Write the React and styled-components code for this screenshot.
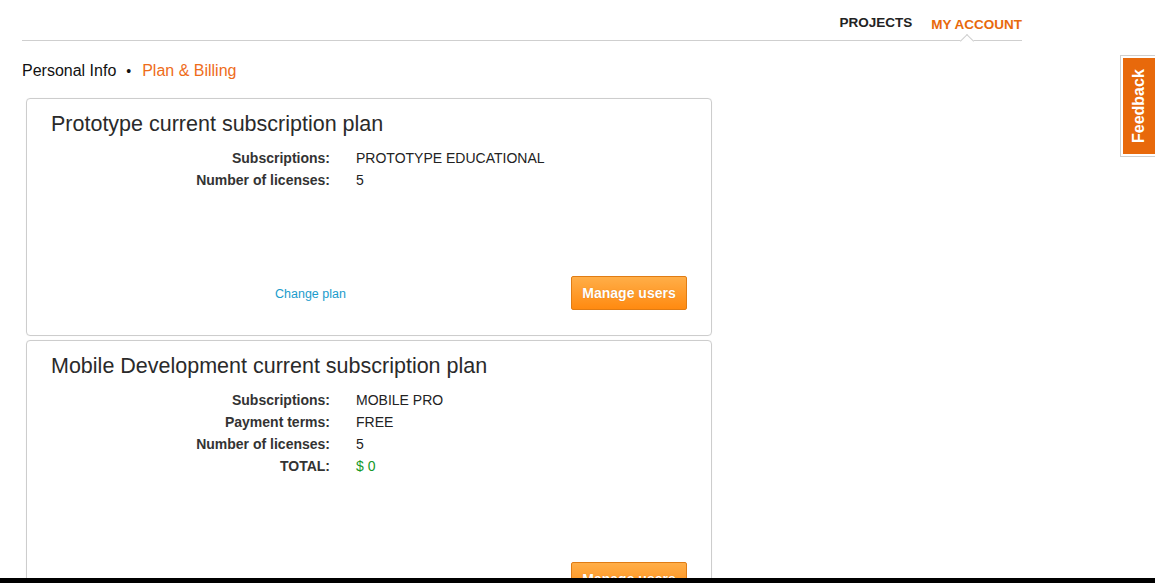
import React from "react";
import styled, { createGlobalStyle } from "styled-components";

const Global = createGlobalStyle`
  html, body { margin: 0; padding: 0; background: #fff; }
  body { font-family: "Liberation Sans", Arial, sans-serif; color: #222; }
`;

const Page = styled.div`
  padding: 0 0 0 22px;
`;

const Header = styled.header`
  width: 1000px;
  display: flex;
  justify-content: flex-end;
  align-items: flex-start;
  gap: 19px;
  border-bottom: 1px solid #cfcfcf;
  height: 41px;
  box-sizing: border-box;
  padding-top: 15px;
`;

const NavItem = styled.a`
  position: relative;
  display: block;
  font-size: 13.5px;
  font-weight: bold;
  line-height: 16px;
  text-transform: uppercase;
  text-decoration: none;
  color: ${(p) => (p.$active ? "#e8690b" : "#222")};
  margin-top: ${(p) => (p.$active ? "2px" : "0")};
  height: ${(p) => (p.$active ? "24px" : "26px")};

  ${(p) =>
    p.$active &&
    `
    &::after {
      content: "";
      position: absolute;
      left: 36px;
      bottom: -5px;
      width: 9px;
      height: 9px;
      background: #fff;
      border-top: 1px solid #cfcfcf;
      border-left: 1px solid #cfcfcf;
      transform: translateX(-50%) rotate(45deg);
    }
  `}
`;

const Breadcrumb = styled.nav`
  display: flex;
  align-items: center;
  font-size: 16px;
  line-height: 20px;
  margin-top: 20px;
  color: #111;
`;

const Crumb = styled.span`
  color: ${(p) => (p.$active ? "#ee6c1a" : "#111")};
`;

const Dot = styled.span`
  margin: 0 11px 0 10px;
  font-size: 14px;
`;

const Cards = styled.div`
  margin: 17px 0 0 4px;
  display: flex;
  flex-direction: column;
  gap: 4px;
  width: 686px;
`;

const Card = styled.section`
  border: 1px solid #cdcdcd;
  border-radius: 4px;
  padding: 13px 24px 25px 24px;
  box-shadow: 0 0 1px rgba(0, 0, 0, 0.08);
`;

const Title = styled.h2`
  margin: 0 0 11px 0;
  font-size: 21.5px;
  line-height: 24px;
  font-weight: normal;
  color: #2a2a2a;
`;

const Details = styled.dl`
  margin: 0;
  display: grid;
  grid-template-columns: 279px 1fr;
  column-gap: 26px;
  font-size: 14px;
  line-height: 22px;
`;

const Label = styled.dt`
  text-align: right;
  font-weight: bold;
  color: #333;
`;

const Value = styled.dd`
  margin: 0;
  color: ${(p) => (p.$green ? "#15982a" : "#222")};
`;

const Footer = styled.div`
  display: flex;
  align-items: center;
  justify-content: space-between;
  margin-top: 85px;
  padding-left: 224px;
`;

const LinkButton = styled.a`
  font-size: 12.5px;
  color: #1a9ccc;
  text-decoration: none;
  cursor: pointer;
  margin-top: 1px;
`;

const Button = styled.button`
  height: 34px;
  width: 116px;
  border: 1px solid #e07c14;
  border-radius: 2px;
  background: linear-gradient(#ffae48, #ff8a10);
  color: #fff;
  font-family: "Liberation Sans", Arial, sans-serif;
  font-size: 14px;
  font-weight: bold;
  text-shadow: 0 0 1px rgba(150, 70, 0, 0.4);
  padding: 0;
  cursor: pointer;
`;

const FeedbackTab = styled.div`
  position: fixed;
  top: 55px;
  right: 0;
  border: 1px solid #cfcfcf;
  border-right: none;
  background: #fff;
  padding: 2px 0 2px 2px;
`;

const FeedbackInner = styled.div`
  width: 32px;
  height: 96px;
  background: #e8690b;
  color: #fff;
  display: flex;
  align-items: center;
  justify-content: center;
  writing-mode: vertical-rl;
  transform: rotate(180deg);
  font-size: 16px;
  font-weight: bold;
`;

const BottomBar = styled.div`
  position: fixed;
  left: 0;
  right: 0;
  bottom: 0;
  height: 5px;
  background: #000;
`;

const plans = [
  {
    title: "Prototype current subscription plan",
    rows: [
      ["Subscriptions:", "PROTOTYPE EDUCATIONAL"],
      ["Number of licenses:", "5"],
    ],
    changePlan: true,
  },
  {
    title: "Mobile Development current subscription plan",
    rows: [
      ["Subscriptions:", "MOBILE PRO"],
      ["Payment terms:", "FREE"],
      ["Number of licenses:", "5"],
      ["TOTAL:", "$ 0", true],
    ],
    changePlan: false,
  },
];

export default function App() {
  return (
    <>
      <Global />
      <Page>
        <Header>
          <NavItem>Projects</NavItem>
          <NavItem $active>My Account</NavItem>
        </Header>
        <Breadcrumb>
          <Crumb>Personal Info</Crumb>
          <Dot>•</Dot>
          <Crumb $active>Plan &amp; Billing</Crumb>
        </Breadcrumb>
        <Cards>
          {plans.map((plan) => (
            <Card key={plan.title}>
              <Title>{plan.title}</Title>
              <Details>
                {plan.rows.map(([label, value, green]) => (
                  <React.Fragment key={label}>
                    <Label>{label}</Label>
                    <Value $green={green}>{value}</Value>
                  </React.Fragment>
                ))}
              </Details>
              <Footer>
                {plan.changePlan ? <LinkButton>Change plan</LinkButton> : <span />}
                <Button>Manage users</Button>
              </Footer>
            </Card>
          ))}
        </Cards>
      </Page>
      <FeedbackTab>
        <FeedbackInner>Feedback</FeedbackInner>
      </FeedbackTab>
      <BottomBar />
    </>
  );
}
